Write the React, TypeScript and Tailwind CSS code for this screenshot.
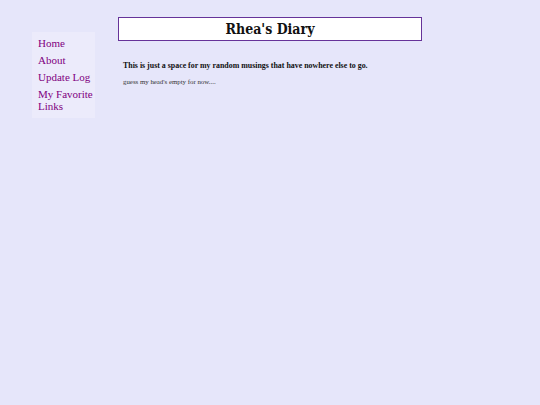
export default function App() {
  return (
    <div className="min-h-[405px] w-full bg-[#e6e6fa] flex items-start" style={{ fontFamily: '"Liberation Serif", serif' }}>
      <nav className="ml-[32px] mt-[32px] w-[63px] bg-[#ecebfb] pl-[6px] pr-[1px] pt-[5px] pb-[6px] flex flex-col gap-[5px]">
        <a className="text-[11px] leading-[12px] text-[#800080]">Home</a>
        <a className="text-[11px] leading-[12px] text-[#800080]">About</a>
        <a className="text-[11px] leading-[12px] text-[#800080] whitespace-nowrap">Update Log</a>
        <a className="text-[11px] leading-[12px] text-[#800080]">My Favorite Links</a>
      </nav>
      <main className="ml-[23px] mt-[17px] w-[304px]">
        <h1 className="h-[24px] bg-white border border-[#663399] flex items-center justify-center text-[14px] font-bold text-[#111]" style={{ fontFamily: '"DejaVu Serif Condensed", "DejaVu Serif", serif' }}>Rhea's Diary</h1>
        <p className="mt-[19px] ml-[5px] text-[7.9px] font-bold text-[#111] whitespace-nowrap">This is just a space for my random musings that have nowhere else to go.</p>
        <p className="mt-[5px] ml-[5px] text-[6.85px] text-[#333] whitespace-nowrap">guess my head's empty for now....</p>
      </main>
    </div>
  );
}
